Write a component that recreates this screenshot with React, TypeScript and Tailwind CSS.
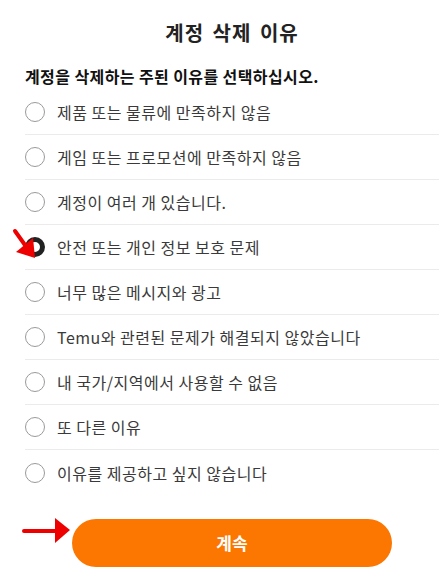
import React, { useState } from 'react';

const REASONS = [
  '제품 또는 물류에 만족하지 않음',
  '게임 또는 프로모션에 만족하지 않음',
  '계정이 여러 개 있습니다.',
  '안전 또는 개인 정보 보호 문제',
  '너무 많은 메시지와 광고',
  'Temu와 관련된 문제가 해결되지 않았습니다',
  '내 국가/지역에서 사용할 수 없음',
  '또 다른 이유',
  '이유를 제공하고 싶지 않습니다',
];

const App: React.FC = () => {
  const [selected, setSelected] = useState(3);

  return (
    <div
      className="w-[446px] h-[575px] bg-white overflow-hidden"
      style={{ fontFamily: '"Noto Sans CJK KR", "Noto Sans", sans-serif' }}
    >
      <div className="relative ml-[25px] w-[414px] pt-[20px]">
        {/* Header */}
        <h1 className="text-center text-[20px] leading-[26px] font-bold text-[#222] tracking-[1px] [word-spacing:3px]">
          계정 삭제 이유
        </h1>
        <p className="mt-[19px] text-[16px] leading-[22px] font-bold text-[#111] tracking-[0.4px]">
          계정을 삭제하는 주된 이유를 선택하십시오.
        </p>

        {/* Options */}
        <div className="mt-[3px]">
          {REASONS.map((reason, index) => (
            <label
              key={index}
              onClick={() => setSelected(index)}
              className={`flex h-[45px] items-center gap-[12px] cursor-pointer ${
                index < REASONS.length - 1 ? 'border-b border-[#ebebeb]' : ''
              }`}
            >
              <span
                className={`w-[20px] h-[20px] rounded-full shrink-0 ${
                  selected === index ? 'border-[5px] border-[#222]' : 'border border-[#9a9a9a]'
                }`}
              />
              <span className="text-[16px] leading-[22px] text-[#3a3a3a] tracking-[0.5px]">{reason}</span>
            </label>
          ))}
        </div>

        {/* Continue */}
        <div className="mt-[24px] flex justify-center">
          <button className="w-[320px] h-[48px] rounded-full bg-[#fb7701] text-white text-[17px] font-bold">
            계속
          </button>
        </div>

        {/* annotation arrows */}
        <svg
          className="absolute left-[-25px] top-0 pointer-events-none"
          width="80"
          height="575"
          viewBox="0 0 80 575"
        >
          <line x1="15" y1="231" x2="25" y2="245" stroke="#ee0000" strokeWidth="4" strokeLinecap="round" />
          <polygon points="16,252 33,238 35,258" fill="#ee0000" />
          <line x1="24" y1="531" x2="57" y2="531" stroke="#ee0000" strokeWidth="4" strokeLinecap="round" />
          <polygon points="55,518 70,530 55,543" fill="#ee0000" />
        </svg>
      </div>
    </div>
  );
};

export default App;
